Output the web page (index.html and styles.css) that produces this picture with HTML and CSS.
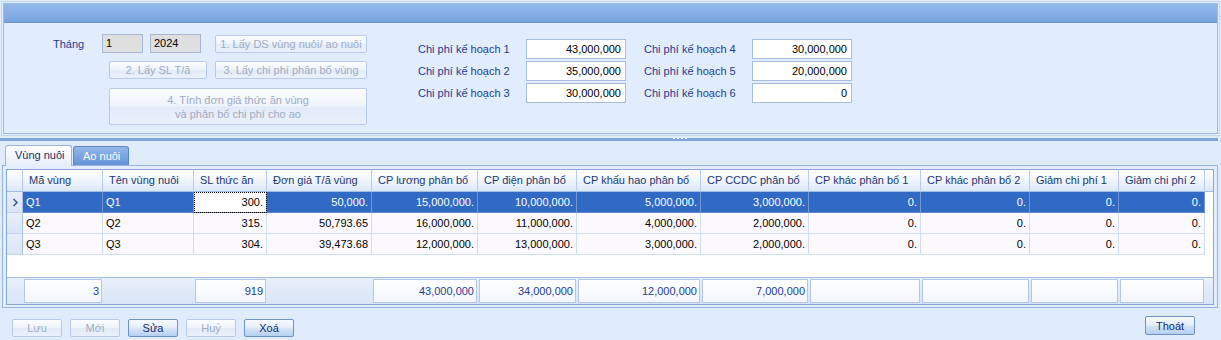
FILE: index.html
```html
<!DOCTYPE html>
<html lang="vi">
<head>
<meta charset="utf-8">
<title>Phân bổ chi phí vùng nuôi</title>
<link rel="stylesheet" href="styles.css">
</head>
<body>
<section class="top">
  <div class="top-in">
    <div class="top-head"></div>
    <div class="top-body">
      <div class="left">
        <div class="row1">
          <span class="lbl thang">Tháng</span>
          <div class="inp grey month">1</div>
          <div class="inp grey year">2024</div>
          <button class="btn dis b1">1. Lấy DS vùng nuôi/ ao nuôi</button>
        </div>
        <div class="row2">
          <button class="btn dis b2">2. Lấy SL T/ã</button>
          <button class="btn dis b3">3. Lấy chi phí phân bổ vùng</button>
        </div>
        <div class="row3">
          <button class="btn dis b4">4. Tính đơn giá thức ăn vùng<br>và phân bổ chi phí cho ao</button>
        </div>
      </div>
      <div class="plan">
        <div class="plan-col">
          <span class="lbl">Chi phí kế hoạch 1</span><div class="num">43,000,000</div>
          <span class="lbl">Chi phí kế hoạch 2</span><div class="num">35,000,000</div>
          <span class="lbl">Chi phí kế hoạch 3</span><div class="num">30,000,000</div>
        </div>
        <div class="plan-col">
          <span class="lbl">Chi phí kế hoạch 4</span><div class="num">30,000,000</div>
          <span class="lbl">Chi phí kế hoạch 5</span><div class="num">20,000,000</div>
          <span class="lbl">Chi phí kế hoạch 6</span><div class="num">0</div>
        </div>
      </div>
    </div>
  </div>
</section>

<div class="splitter"><div class="bar"><div class="grip"><i></i><i></i><i></i><i></i></div></div></div>

<div class="tabs">
  <div class="tab active">Vùng nuôi</div>
  <div class="tab inact">Ao nuôi</div>
</div>

<section class="page">
  <div class="grid">
    <div class="gr head">
      <div class="c ind"></div>
      <div class="c">Mã vùng</div>
      <div class="c">Tên vùng nuôi</div>
      <div class="c">SL thức ăn</div>
      <div class="c">Đơn giá T/ã vùng</div>
      <div class="c">CP lương phân bổ</div>
      <div class="c">CP điện phân bổ</div>
      <div class="c">CP khấu hao phân bổ</div>
      <div class="c">CP CCDC phân bổ</div>
      <div class="c">CP khác phân bổ 1</div>
      <div class="c">CP khác phân bổ 2</div>
      <div class="c">Giảm chi phí 1</div>
      <div class="c">Giảm chi phí 2</div>
      <div class="c fill"></div>
    </div>
    <div class="gr row sel">
      <div class="c ind"><svg width="8" height="9" viewBox="0 0 8 9"><polyline points="2.5,1 6,4.5 2.5,8" fill="none" stroke="#3f5f95" stroke-width="1.6"/></svg></div>
      <div class="c t">Q1</div>
      <div class="c t">Q1</div>
      <div class="c n focus">300.</div>
      <div class="c n">50,000.</div>
      <div class="c n">15,000,000.</div>
      <div class="c n">10,000,000.</div>
      <div class="c n">5,000,000.</div>
      <div class="c n">3,000,000.</div>
      <div class="c n">0.</div>
      <div class="c n">0.</div>
      <div class="c n">0.</div>
      <div class="c n">0.</div>
      <div class="c fill"></div>
    </div>
    <div class="gr row">
      <div class="c ind"></div>
      <div class="c t">Q2</div>
      <div class="c t">Q2</div>
      <div class="c n">315.</div>
      <div class="c n">50,793.65</div>
      <div class="c n">16,000,000.</div>
      <div class="c n">11,000,000.</div>
      <div class="c n">4,000,000.</div>
      <div class="c n">2,000,000.</div>
      <div class="c n">0.</div>
      <div class="c n">0.</div>
      <div class="c n">0.</div>
      <div class="c n">0.</div>
      <div class="c fill"></div>
    </div>
    <div class="gr row">
      <div class="c ind"></div>
      <div class="c t">Q3</div>
      <div class="c t">Q3</div>
      <div class="c n">304.</div>
      <div class="c n">39,473.68</div>
      <div class="c n">12,000,000.</div>
      <div class="c n">13,000,000.</div>
      <div class="c n">3,000,000.</div>
      <div class="c n">2,000,000.</div>
      <div class="c n">0.</div>
      <div class="c n">0.</div>
      <div class="c n">0.</div>
      <div class="c n">0.</div>
      <div class="c fill"></div>
    </div>
    <div class="empty"></div>
    <div class="gr foot">
      <div class="c"></div>
      <div class="c"><div class="box">3</div></div>
      <div class="c"></div>
      <div class="c"><div class="box">919</div></div>
      <div class="c"></div>
      <div class="c"><div class="box">43,000,000</div></div>
      <div class="c"><div class="box">34,000,000</div></div>
      <div class="c"><div class="box">12,000,000</div></div>
      <div class="c"><div class="box">7,000,000</div></div>
      <div class="c"><div class="box"></div></div>
      <div class="c"><div class="box"></div></div>
      <div class="c"><div class="box"></div></div>
      <div class="c"><div class="box"></div></div>
      <div class="c"></div>
    </div>
  </div>
</section>

<div class="toolbar">
  <div class="group">
    <button class="btn dis tb">Lưu</button>
    <button class="btn dis tb">Mới</button>
    <button class="btn en tb">Sửa</button>
    <button class="btn dis tb">Huỷ</button>
    <button class="btn en tb">Xoá</button>
  </div>
  <button class="btn en tb exit">Thoát</button>
</div>
</body>
</html>
```

FILE: styles.css
```css
html, body {
  margin: 0;
  padding: 0;
}
body {
  width: 1221px;
  height: 340px;
  overflow: hidden;
  background: #e0ebfb;
  font: 11px "Liberation Sans", Arial, sans-serif;
  color: #000;
}

/* ---------- top panel ---------- */
.top {
  margin: 1px 1px 0;
  border: 1px solid #c3d7f3;
  padding: 1px;
}
.top-in {
  border: 1px solid #9ebbe6;
  background: #e1edfd;
}
.top-head {
  height: 18px;
  border-bottom: 1px solid #6693d3;
  background: linear-gradient(#93b9ea, #7aa5df);
}
.top-body {
  height: 110px;
  display: flex;
}
.left {
  flex: none;
  padding-top: 11px;
}
.lbl {
  color: #1f3c8c;
  white-space: nowrap;
}
.row1 {
  display: flex;
  align-items: center;
  margin-left: 49px;
  height: 19px;
}
.thang {
  width: 49px;
}
.inp {
  box-sizing: border-box;
  height: 19px;
  border: 1px solid #a6b8d4;
  padding-left: 3px;
  line-height: 17px;
}
.grey {
  background: #dfdfdf;
}
.month {
  width: 41px;
  margin-right: 7px;
}
.year {
  width: 51px;
  margin-right: 14px;
}
.btn {
  box-sizing: border-box;
  font: inherit;
  padding: 0;
  border-radius: 2px;
  cursor: default;
}
.btn.dis {
  border: 1px solid #b7cbe8;
  background: linear-gradient(#fbfdff 0%, #eef4fc 48%, #e2ebf8 52%, #eaf1fb 100%);
  color: #a1abbf;
}
.btn.en {
  border: 1px solid #7090c8;
  background: linear-gradient(#f7faff 0%, #e6eff9 45%, #d5e4f6 55%, #b5cff1 100%);
  color: #14296a;
}
.b1 {
  width: 152px;
  height: 18px;
}
.row2 {
  display: flex;
  gap: 8px;
  margin: 8px 0 0 105px;
}
.b2 {
  width: 98px;
  height: 18px;
}
.b3 {
  width: 152px;
  height: 18px;
}
.row3 {
  margin: 9px 0 0 105px;
}
.b4 {
  display: block;
  width: 258px;
  height: 37px;
  line-height: 14px;
}

.plan {
  display: flex;
  gap: 18px;
  margin-left: 51px;
  padding-top: 16px;
}
.plan-col {
  display: grid;
  grid-template-columns: 108px 100px;
  grid-auto-rows: 20px;
  row-gap: 2px;
  align-items: center;
}
.num {
  box-sizing: border-box;
  height: 20px;
  border: 1px solid #a7bde0;
  background: #fff;
  text-align: right;
  padding-right: 4px;
  line-height: 18px;
}

/* ---------- splitter ---------- */
.splitter {
  height: 7px;
}
.bar {
  margin: 2px 3px 0 0;
  height: 3px;
  background: #7fa6dc;
}
.grip {
  display: flex;
  gap: 2px;
  margin-left: 673px;
  padding-top: 0;
}
.grip i {
  width: 2px;
  height: 1px;
  background: #f2f6fd;
}

/* ---------- tabs ---------- */
.tabs {
  display: flex;
  align-items: flex-end;
  height: 20px;
  padding-left: 5px;
  position: relative;
  z-index: 1;
}
.tab {
  box-sizing: border-box;
  padding-left: 9px;
  border-radius: 3px 3px 0 0;
}
.tab.active {
  width: 67px;
  height: 21px;
  margin-bottom: -1px;
  border: 1px solid #99b5de;
  border-bottom: none;
  background: linear-gradient(#ffffff, #e6eefb);
  color: #1b2f66;
  line-height: 19px;
}
.tab.inact {
  width: 56px;
  height: 19px;
  margin-left: 1px;
  border: 1px solid #5c86c8;
  border-bottom: none;
  background: linear-gradient(#93b7ea, #6592d8);
  color: #ffffff;
  line-height: 18px;
}

/* ---------- page & grid ---------- */
.page {
  margin: 0 3px 0 2px;
  border: 1px solid #98b4dd;
  padding: 3px 3px 2px 3px;
  background: #e3edfb;
}
.grid {
  border: 1px solid #8aa8d5;
  background: #fff;
}
.gr {
  display: grid;
  grid-template-columns: 16px 80px 91px 73px 105px 106px 99px 124px 108px 112px 109px 89px 86px 1fr;
}
.c {
  box-sizing: border-box;
  white-space: nowrap;
  overflow: hidden;
}
.head .c {
  height: 22px;
  line-height: 21px;
  padding-left: 6px;
  color: #1c3870;
  background: linear-gradient(#ffffff 0%, #eef4fc 55%, #dbe7f7 100%);
  border-right: 1px solid #b9cce8;
  border-bottom: 1px solid #a4bde2;
}
.head .c.ind {
  padding: 0;
}
.head .c.fill {
  border-right: none;
  padding: 0;
}
.row .c {
  height: 21px;
  line-height: 20px;
  background: #fcf9fe;
  border-right: 1px solid #d0ddef;
  border-bottom: 1px solid #d0ddef;
}
.row .c.t {
  padding-left: 3px;
}
.row .c.n {
  text-align: right;
  padding-right: 3px;
}
.row .c.ind {
  background: linear-gradient(#e8eff9, #d9e5f6);
  border-right: 1px solid #a9c0e3;
  border-bottom: 1px solid #c3d4ed;
  display: flex;
  align-items: center;
  padding-left: 4px;
}
.row .c.fill {
  background: #fff;
  border: none;
}
.row.sel .c {
  background: #316ac5;
  color: #fff;
  border-right-color: #7096d6;
  border-bottom-color: #5f88cf;
}
.row.sel .c.ind {
  background: linear-gradient(#e8eff9, #d9e5f6);
  border-right: 1px solid #a9c0e3;
  border-bottom: 1px solid #c3d4ed;
}
.row.sel .c.fill {
  background: #fff;
  border: none;
}
.row.sel .c.focus {
  background: #fff;
  color: #000;
  outline: 1px dotted #000;
  outline-offset: -1px;
}
.empty {
  height: 22px;
  background: #fff;
}
.foot {
  height: 27px;
  box-sizing: border-box;
  border-top: 1px solid #a2bbe0;
  background: linear-gradient(#e8f0fa, #d8e5f6);
}
.foot .c {
  padding: 1px 1px 0 1px;
}
.box {
  box-sizing: border-box;
  height: 24px;
  border: 1px solid #b3c7e5;
  background: linear-gradient(#ffffff, #f1f6fd);
  text-align: right;
  padding-right: 2px;
  line-height: 22px;
  color: #26408f;
}

/* ---------- toolbar ---------- */
.toolbar {
  display: flex;
  align-items: flex-start;
  height: 34px;
  padding-left: 12px;
}
.group {
  display: flex;
  gap: 8px;
  margin-top: 11px;
}
.tb {
  width: 50px;
  height: 18px;
}
.exit {
  margin-left: auto;
  margin-right: 26px;
  margin-top: 8px;
  height: 19px;
}
```
